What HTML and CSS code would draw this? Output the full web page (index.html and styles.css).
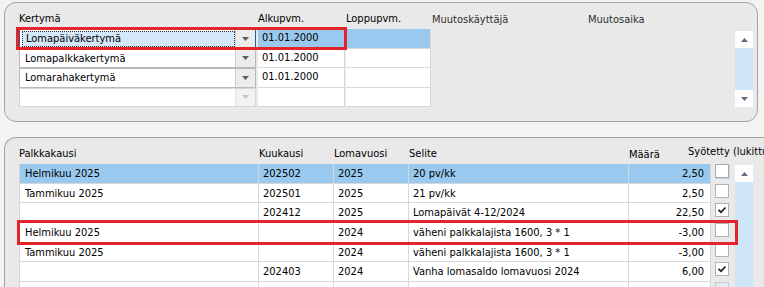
FILE: index.html
```html
<!DOCTYPE html>
<html lang="fi">
<head>
<meta charset="utf-8">
<title>Kertymät</title>
<link rel="stylesheet" href="styles.css">
</head>
<body>
<section class="panel panel-top">
  <div class="grid-top">
    <div class="hd">Kertymä</div>
    <div class="hd">Alkupvm.</div>
    <div class="hd">Loppupvm.</div>
    <div class="hd hd-dim">Muutoskäyttäjä</div>
    <div class="hd hd-dim">Muutosaika</div>
    <div class="hd"></div>

    <div class="combo combo-focus"><span class="combo-text"><span class="focus-rect">Lomapäiväkertymä</span></span><span class="combo-btn"><svg width="7" height="4" viewBox="0 0 7 4"><polygon points="0,0 7,0 3.5,4" fill="#606060"/></svg></span></div>
    <div class="cell cell-sel">01.01.2000</div>
    <div class="cell cell-sel cell-narrow"></div>
    <div class="blank"></div>
    <div class="blank"></div>
    <div class="vscroll vscroll-top">
      <span class="sb-btn"><svg width="7" height="4" viewBox="0 0 7 4"><polygon points="0,4 7,4 3.5,0" fill="#5d6b80"/></svg></span>
      <span class="sb-track"></span>
      <span class="sb-btn"><svg width="7" height="4" viewBox="0 0 7 4"><polygon points="0,0 7,0 3.5,4" fill="#5d6b80"/></svg></span>
    </div>

    <div class="combo"><span class="combo-text">Lomapalkkakertymä</span><span class="combo-btn"><svg width="7" height="4" viewBox="0 0 7 4"><polygon points="0,0 7,0 3.5,4" fill="#606060"/></svg></span></div>
    <div class="cell">01.01.2000</div>
    <div class="cell cell-narrow"></div>
    <div class="blank"></div>
    <div class="blank"></div>

    <div class="combo"><span class="combo-text">Lomarahakertymä</span><span class="combo-btn"><svg width="7" height="4" viewBox="0 0 7 4"><polygon points="0,0 7,0 3.5,4" fill="#606060"/></svg></span></div>
    <div class="cell">01.01.2000</div>
    <div class="cell cell-narrow"></div>
    <div class="blank"></div>
    <div class="blank"></div>

    <div class="combo combo-disabled"><span class="combo-text"></span><span class="combo-btn"><svg width="7" height="4" viewBox="0 0 7 4"><polygon points="0,0 7,0 3.5,4" fill="#c4c4c4"/></svg></span></div>
    <div class="cell"></div>
    <div class="cell cell-narrow"></div>
    <div class="blank"></div>
    <div class="blank"></div>
  </div>
  <div class="mark mark-top"></div>
</section>

<section class="panel panel-bottom">
  <div class="grid-bottom">
    <div class="hd">Palkkakausi</div>
    <div class="hd">Kuukausi</div>
    <div class="hd">Lomavuosi</div>
    <div class="hd">Selite</div>
    <div class="hd hd-num">Määrä</div>
    <div class="hd hd-wide">Syötetty (lukittu)</div>

    <div class="td td-first sel">Helmikuu 2025</div>
    <div class="td sel">202502</div>
    <div class="td sel">2025</div>
    <div class="td sel">20 pv/kk</div>
    <div class="td num sel">2,50</div>
    <div class="chk"><span class="box box-sel"></span></div>
    <div class="vscroll vscroll-bottom">
      <span class="sb-btn"><svg width="7" height="4" viewBox="0 0 7 4"><polygon points="0,4 7,4 3.5,0" fill="#5d6b80"/></svg></span>
      <span class="sb-track"></span>
    </div>

    <div class="td td-first">Tammikuu 2025</div>
    <div class="td">202501</div>
    <div class="td">2025</div>
    <div class="td">21 pv/kk</div>
    <div class="td num">2,50</div>
    <div class="chk"><span class="box"></span></div>

    <div class="td td-first"></div>
    <div class="td">202412</div>
    <div class="td">2025</div>
    <div class="td">Lomapäivät 4-12/2024</div>
    <div class="td num">22,50</div>
    <div class="chk"><span class="box"><svg width="10" height="8" viewBox="0 0 10 8"><path d="M1.5 3.8 L4 6.2 L8.5 1.5" fill="none" stroke="#222" stroke-width="1.7"/></svg></span></div>

    <div class="td td-first">Helmikuu 2025</div>
    <div class="td"></div>
    <div class="td">2024</div>
    <div class="td">väheni palkkalajista 1600, 3 * 1</div>
    <div class="td num">-3,00</div>
    <div class="chk"><span class="box"></span></div>

    <div class="td td-first">Tammikuu 2025</div>
    <div class="td"></div>
    <div class="td">2024</div>
    <div class="td">väheni palkkalajista 1600, 3 * 1</div>
    <div class="td num">-3,00</div>
    <div class="chk"><span class="box"></span></div>

    <div class="td td-first"></div>
    <div class="td">202403</div>
    <div class="td">2024</div>
    <div class="td">Vanha lomasaldo lomavuosi 2024</div>
    <div class="td num">6,00</div>
    <div class="chk"><span class="box"><svg width="10" height="8" viewBox="0 0 10 8"><path d="M1.5 3.8 L4 6.2 L8.5 1.5" fill="none" stroke="#222" stroke-width="1.7"/></svg></span></div>

    <div class="td td-first"></div>
    <div class="td"></div>
    <div class="td"></div>
    <div class="td"></div>
    <div class="td num"></div>
    <div class="chk"><span class="box box-dim"></span></div>
  </div>
  <div class="mark mark-bottom"></div>
</section>
</body>
</html>
```

FILE: styles.css
```css
html, body {
  margin: 0;
  padding: 0;
}
body {
  width: 764px;
  height: 287px;
  overflow: hidden;
  background: #f3f3f3;
  font-family: "DejaVu Sans Condensed", "DejaVu Sans", sans-serif;
  font-size: 11px;
  color: #000;
}
.panel {
  position: relative;
  box-sizing: border-box;
  background: #e9e9e9;
  border: 1px solid #a3a3a3;
  border-radius: 12px;
  margin-left: 4px;
}
.panel-top {
  margin-top: 2px;
  width: 754px;
  height: 120px;
  padding: 9px 3px 0 14px;
}
.panel-bottom {
  margin-top: 15px;
  width: 760px;
  height: 180px;
  padding: 9px 0 0 14px;
  border-right: none;
  border-top-right-radius: 0;
}

/* top grid */
.grid-top {
  display: grid;
  grid-template-columns: 239px 88px 86px 156px 147px 18px;
  grid-template-rows: 17px repeat(4, 19.5px);
}
.hd {
  line-height: 14px;
  white-space: nowrap;
}
.hd-dim {
  color: #2e2e2e;
  padding-top: 1px;
}
.combo {
  box-sizing: border-box;
  width: 237px;
  height: 19.5px;
  display: flex;
  background: #fff;
  border: 1px solid #b9b9b9;
}
.combo-text {
  flex: 1;
  display: flex;
  align-items: center;
  line-height: 15px;
  padding-left: 5px;
}
.combo-focus {
  border-color: #2a5d9e;
}
.combo-focus .combo-text {
  padding: 1px 0 1px 2px;
}
.focus-rect {
  box-sizing: border-box;
  flex: 1;
  height: 100%;
  display: flex;
  align-items: center;
  padding-left: 3px;
  background: #d3e7f8;
  border: 1px dotted #333;
}
.combo-btn {
  width: 19px;
  display: flex;
  align-items: center;
  justify-content: center;
  background: #ececec;
  border-left: 1px solid #cfcfcf;
}
.combo-disabled {
  border-color: #d6d6d6;
}
.combo-disabled .combo-btn {
  background: #f2f2f2;
  border-left-color: #e2e2e2;
}
.cell {
  box-sizing: border-box;
  width: 87px;
  height: 19.5px;
  background: #fff;
  border-bottom: 1px solid #d8d8d8;
  border-right: 1px solid #d8d8d8;
  padding-left: 4px;
  line-height: 18px;
}
.cell-narrow {
  width: 85px;
}
.cell-sel {
  background: #99c9ee;
}
.blank {
  height: 19.5px;
}
.vscroll {
  display: flex;
  flex-direction: column;
  width: 18px;
}
.vscroll-top {
  grid-column: 6;
  grid-row: 2 / 6;
  margin-top: 2px;
  height: 76px;
}
.vscroll-bottom {
  grid-column: 7;
  grid-row: 2 / 9;
  margin-top: 1px;
}
.sb-btn {
  height: 17px;
  flex: none;
  display: flex;
  align-items: center;
  justify-content: center;
  background: #fff;
}
.sb-track {
  flex: 1;
  background: #cfe5f8;
}

/* bottom grid */
.grid-bottom {
  display: grid;
  grid-template-columns: 240px 75px 75px 220px 82px 24px 18px;
  grid-template-rows: 17px repeat(7, 19.67px);
}
.hd-num {
  padding-top: 1px;
}
.hd-wide {
  grid-column: 6 / 8;
  margin-top: -2px;
  margin-left: -23px;
}
.td {
  box-sizing: border-box;
  background: #fff;
  border-right: 1px solid #d8d8d8;
  border-bottom: 1px solid #d8d8d8;
  padding-left: 4px;
  line-height: 19px;
  white-space: nowrap;
  overflow: hidden;
}
.td-first {
  border-left: 1px solid #d8d8d8;
  padding-left: 5px;
}
.td.sel {
  background: #99c9ee;
}
.td.num {
  text-align: right;
  padding-right: 6px;
}
.chk {
  padding-left: 4px;
}
.box {
  box-sizing: border-box;
  width: 14px;
  height: 14px;
  display: flex;
  align-items: center;
  justify-content: center;
  background: #fff;
  border: 1px solid #b3b3b3;
}
.box-sel {
  border-color: #a9a9a9;
  box-shadow: 1px 1px 0 #bcd6ee;
}
.box-dim {
  background: #e4eaf1;
  border-color: #c4ccd6;
}

/* annotation boxes */
.mark {
  position: absolute;
  box-sizing: border-box;
  border: 3px solid #e3242b;
  pointer-events: none;
}
.mark-top {
  left: 11px;
  top: 24px;
  width: 331px;
  height: 23px;
}
.mark-bottom {
  left: 12px;
  top: 82px;
  width: 721px;
  height: 25px;
}
```
